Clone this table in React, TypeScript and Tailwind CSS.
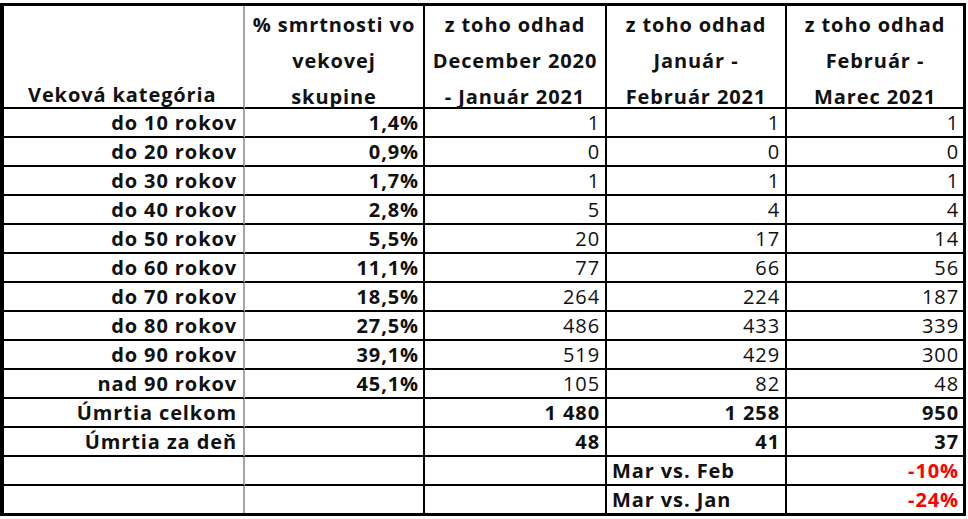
const rows: { label: string; pct: string; a: string; b: string; c: string }[] = [
  { label: "do 10 rokov", pct: "1,4%", a: "1", b: "1", c: "1" },
  { label: "do 20 rokov", pct: "0,9%", a: "0", b: "0", c: "0" },
  { label: "do 30 rokov", pct: "1,7%", a: "1", b: "1", c: "1" },
  { label: "do 40 rokov", pct: "2,8%", a: "5", b: "4", c: "4" },
  { label: "do 50 rokov", pct: "5,5%", a: "20", b: "17", c: "14" },
  { label: "do 60 rokov", pct: "11,1%", a: "77", b: "66", c: "56" },
  { label: "do 70 rokov", pct: "18,5%", a: "264", b: "224", c: "187" },
  { label: "do 80 rokov", pct: "27,5%", a: "486", b: "433", c: "339" },
  { label: "do 90 rokov", pct: "39,1%", a: "519", b: "429", c: "300" },
  { label: "nad 90 rokov", pct: "45,1%", a: "105", b: "82", c: "48" },
];

const cell = "h-[29px] border-b-2 border-black flex items-center leading-none";
const sep = "border-r-2 border-black";
const head = "h-[103px] border-b-2 border-black font-bold leading-[36px] text-center pt-[1px]";

export default function App() {
  return (
    <div className="w-[968px] h-[519px] bg-white pt-[3px] text-[#111] font-['Open_Sans','Liberation_Sans',sans-serif] text-[20px] tracking-[0.9px]">
      <div className="w-[966px] border-l-4 border-t-[3px] border-r-[3px] border-b-[3px] border-black grid grid-cols-[241px_180px_182px_180px_176px]">
        {/* header */}
        <div className="h-[103px] border-b-2 border-r-2 border-b-black border-r-[#a6a6a6] font-bold leading-[36px] pl-[24px] pt-[71px]">
          Veková kategória
        </div>
        <div className={`${head} ${sep}`}>
          % smrtnosti vo
          <br />
          vekovej
          <br />
          skupine
        </div>
        <div className={`${head} ${sep}`}>
          z toho odhad
          <br />
          December 2020
          <br />- Január 2021
        </div>
        <div className={`${head} ${sep}`}>
          z toho odhad
          <br />
          Január -
          <br />
          Február 2021
        </div>
        <div className={head}>
          z toho odhad
          <br />
          Február -
          <br />
          Marec 2021
        </div>

        {rows.map((r) => (
          <Row key={r.label} label={r.label} pct={r.pct} a={r.a} b={r.b} c={r.c} />
        ))}

        <div className={`${cell} border-r-2 border-r-[#a6a6a6] justify-end pr-[6px] font-bold`}>Úmrtia celkom</div>
        <div className={`${cell} ${sep}`} />
        <div className={`${cell} ${sep} justify-end pr-[5px] font-bold`}>1 480</div>
        <div className={`${cell} ${sep} justify-end pr-[5px] font-bold`}>1 258</div>
        <div className={`${cell} justify-end pr-[4px] font-bold`}>950</div>

        <div className={`${cell} border-r-2 border-r-[#a6a6a6] justify-end pr-[6px] font-bold`}>Úmrtia za deň</div>
        <div className={`${cell} ${sep}`} />
        <div className={`${cell} ${sep} justify-end pr-[5px] font-bold`}>48</div>
        <div className={`${cell} ${sep} justify-end pr-[5px] font-bold`}>41</div>
        <div className={`${cell} justify-end pr-[4px] font-bold`}>37</div>

        <div className={`${cell} border-r-2 border-r-[#a6a6a6]`} />
        <div className={`${cell} ${sep}`} />
        <div className={`${cell} ${sep}`} />
        <div className={`${cell} ${sep} pl-[5px] font-bold`}>Mar vs. Feb</div>
        <div className={`${cell} justify-end pr-[4px] font-bold text-[#ff0000]`}>-10%</div>

        <div className="h-[27px] border-r-2 border-r-[#a6a6a6]" />
        <div className={`h-[27px] ${sep}`} />
        <div className={`h-[27px] ${sep}`} />
        <div className={`h-[27px] ${sep} flex items-center leading-none pl-[5px] font-bold`}>Mar vs. Jan</div>
        <div className="h-[27px] flex items-center justify-end leading-none pr-[4px] font-bold text-[#ff0000]">-24%</div>
      </div>
    </div>
  );
}

function Row({ label, pct, a, b, c }: { label: string; pct: string; a: string; b: string; c: string }) {
  return (
    <>
      <div className={`${cell} border-r-2 border-r-[#a6a6a6] justify-end pr-[6px] font-bold`}>{label}</div>
      <div className={`${cell} ${sep} justify-end pr-[4px] font-bold`}>{pct}</div>
      <div className={`${cell} ${sep} justify-end pr-[5px]`}>{a}</div>
      <div className={`${cell} ${sep} justify-end pr-[5px]`}>{b}</div>
      <div className={`${cell} justify-end pr-[4px]`}>{c}</div>
    </>
  );
}
